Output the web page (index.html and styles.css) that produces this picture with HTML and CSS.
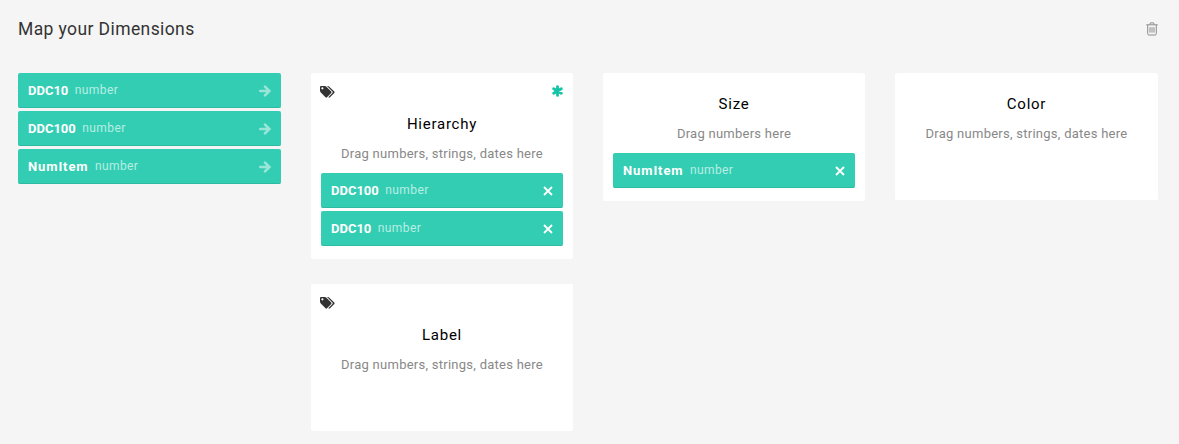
FILE: index.html
```html
<!DOCTYPE html>
<html lang="en">
<head>
<meta charset="utf-8">
<title>Map your Dimensions</title>
<link rel="stylesheet" href="styles.css">
</head>
<body>
<svg class="sprite" width="0" height="0">
  <symbol id="arrow" viewBox="0 0 12 12"><path d="M1.3 6H10M6 1.6L10.4 6L6 10.4" fill="none" stroke="currentColor" stroke-width="2.6" stroke-linecap="round"/></symbol>
  <symbol id="close" viewBox="0 0 10 10"><path d="M1 1L9 9M9 1L1 9" fill="none" stroke="currentColor" stroke-width="1.8"/></symbol>
  <symbol id="tags" viewBox="0 0 15 12"><path fill-rule="evenodd" d="M0 1Q0 0 1 0H4.8Q5.7 0 6.4.7L11.2 5.4Q11.9 6.1 11.2 6.9L7 11.3Q6.3 12 5.5 11.3L.8 6.4Q0 5.6 0 4.8ZM2.4 1.2A1.1 1.1 0 1 0 2.4 3.4A1.1 1.1 0 1 0 2.4 1.2Z" fill="currentColor"/><path d="M7 0H7.9Q8.6 0 9.3.7L14.3 5.4Q15 6.1 14.3 6.9L10 11.3Q9.2 12 8.3 11.3L12.4 7.1Q13.1 6.2 12.4 5.4Z" fill="currentColor"/></symbol>
  <symbol id="asterisk" viewBox="0 0 11 12"><path d="M5.5 1.6V10.4M1.7 3.8L9.3 8.2M9.3 3.8L1.7 8.2" fill="none" stroke="currentColor" stroke-width="2.8" stroke-linecap="round"/></symbol>
  <symbol id="trash" viewBox="0 0 12 14"><path d="M.3 2.8H11.7M3.8 2.5L4.4.9H7.6L8.2 2.5M1.7 3V11.6Q1.7 13 2.8 13H9.2Q10.3 13 10.3 11.6V3M4 5.2V10.6M6 5.2V10.6M8 5.2V10.6" fill="none" stroke="currentColor"/></symbol>
</svg>
<main class="mapping">
  <header class="header">
    <h1 class="title">Map your Dimensions</h1>
    <svg class="trash"><use href="#trash"/></svg>
  </header>
  <div class="columns">
    <div class="pills">
      <div class="pill"><b class="name">DDC10</b><span class="type">number</span><svg class="arrow"><use href="#arrow"/></svg></div>
      <div class="pill"><b class="name">DDC100</b><span class="type">number</span><svg class="arrow"><use href="#arrow"/></svg></div>
      <div class="pill"><b class="name wide">NumItem</b><span class="type">number</span><svg class="arrow"><use href="#arrow"/></svg></div>
    </div>
    <div class="stack">
      <section class="card">
        <div class="flags"><svg class="tags"><use href="#tags"/></svg><svg class="asterisk"><use href="#asterisk"/></svg></div>
        <h2 class="heading">Hierarchy</h2>
        <p class="hint">Drag numbers, strings, dates here</p>
        <div class="pills">
          <div class="pill"><b class="name">DDC100</b><span class="type">number</span><svg class="close"><use href="#close"/></svg></div>
          <div class="pill"><b class="name">DDC10</b><span class="type">number</span><svg class="close"><use href="#close"/></svg></div>
        </div>
      </section>
      <section class="card empty">
        <div class="flags"><svg class="tags"><use href="#tags"/></svg></div>
        <h2 class="heading">Label</h2>
        <p class="hint">Drag numbers, strings, dates here</p>
      </section>
    </div>
    <section class="card">
      <h2 class="heading">Size</h2>
      <p class="hint">Drag numbers here</p>
      <div class="pills">
        <div class="pill"><b class="name wide">NumItem</b><span class="type">number</span><svg class="close"><use href="#close"/></svg></div>
      </div>
    </section>
    <section class="card empty">
      <h2 class="heading">Color</h2>
      <p class="hint">Drag numbers, strings, dates here</p>
    </section>
  </div>
</main>
</body>
</html>
```
FILE: styles.css
```css
* { box-sizing: border-box; }
body {
  margin: 0;
  background: #f5f5f5;
  color: #333;
  font-family: Roboto, sans-serif;
  overflow: hidden;
}
.sprite { display: none; }
svg { display: block; flex: none; }
.mapping { padding: 18px 21px 0 18px; }
.header {
  display: flex;
  justify-content: space-between;
  align-items: center;
  height: 22px;
  margin-bottom: 33px;
}
.title { margin: 0; font-size: 17.5px; font-weight: 400; letter-spacing: .4px; line-height: 22px; }
.trash { width: 12px; height: 14px; color: #8c8c8c; }
.columns {
  display: grid;
  grid-template-columns: 263px 262px 262px 263px;
  gap: 30px;
  align-items: start;
}
.stack { display: grid; gap: 25px; }
.card {
  padding: 20px 10px 13px;
  border-radius: 2px;
  background: #fff;
  text-align: center;
}
.card.empty { padding-bottom: 56px; }
.stack .card { padding-top: 13px; }
.flags { display: flex; justify-content: space-between; height: 27px; }
.tags { width: 15px; height: 12px; margin-left: -1px; }
.asterisk { width: 11px; height: 12px; margin-top: -1px; color: #14c4a6; }
.heading {
  margin: 0;
  color: #000;
  font-size: 15px;
  font-weight: 400;
  letter-spacing: .75px;
  line-height: 22px;
}
.hint { margin: 9px 0; color: #888; font-size: 13px; letter-spacing: .26px; line-height: 20px; }
.card.empty .hint { margin-bottom: 0; }
.pills { display: grid; gap: 3px; }
.pill {
  display: flex;
  align-items: center;
  height: 35px;
  padding: 0 10px;
  border-bottom: 1px solid #2dbba2;
  border-radius: 2px;
  background: #33cdb3;
  color: #fff;
  font-size: 13px;
}
.name { letter-spacing: 0; }
.name.wide { letter-spacing: .9px; }
.type { margin-left: 6.5px; color: #b9eee4; font-size: 12px; letter-spacing: .4px; }
.arrow { width: 12px; height: 12px; margin: 2px 0 0 auto; color: #99e6d9; }
.close { width: 10px; height: 10px; margin: 1px 0 0 auto; }
```
